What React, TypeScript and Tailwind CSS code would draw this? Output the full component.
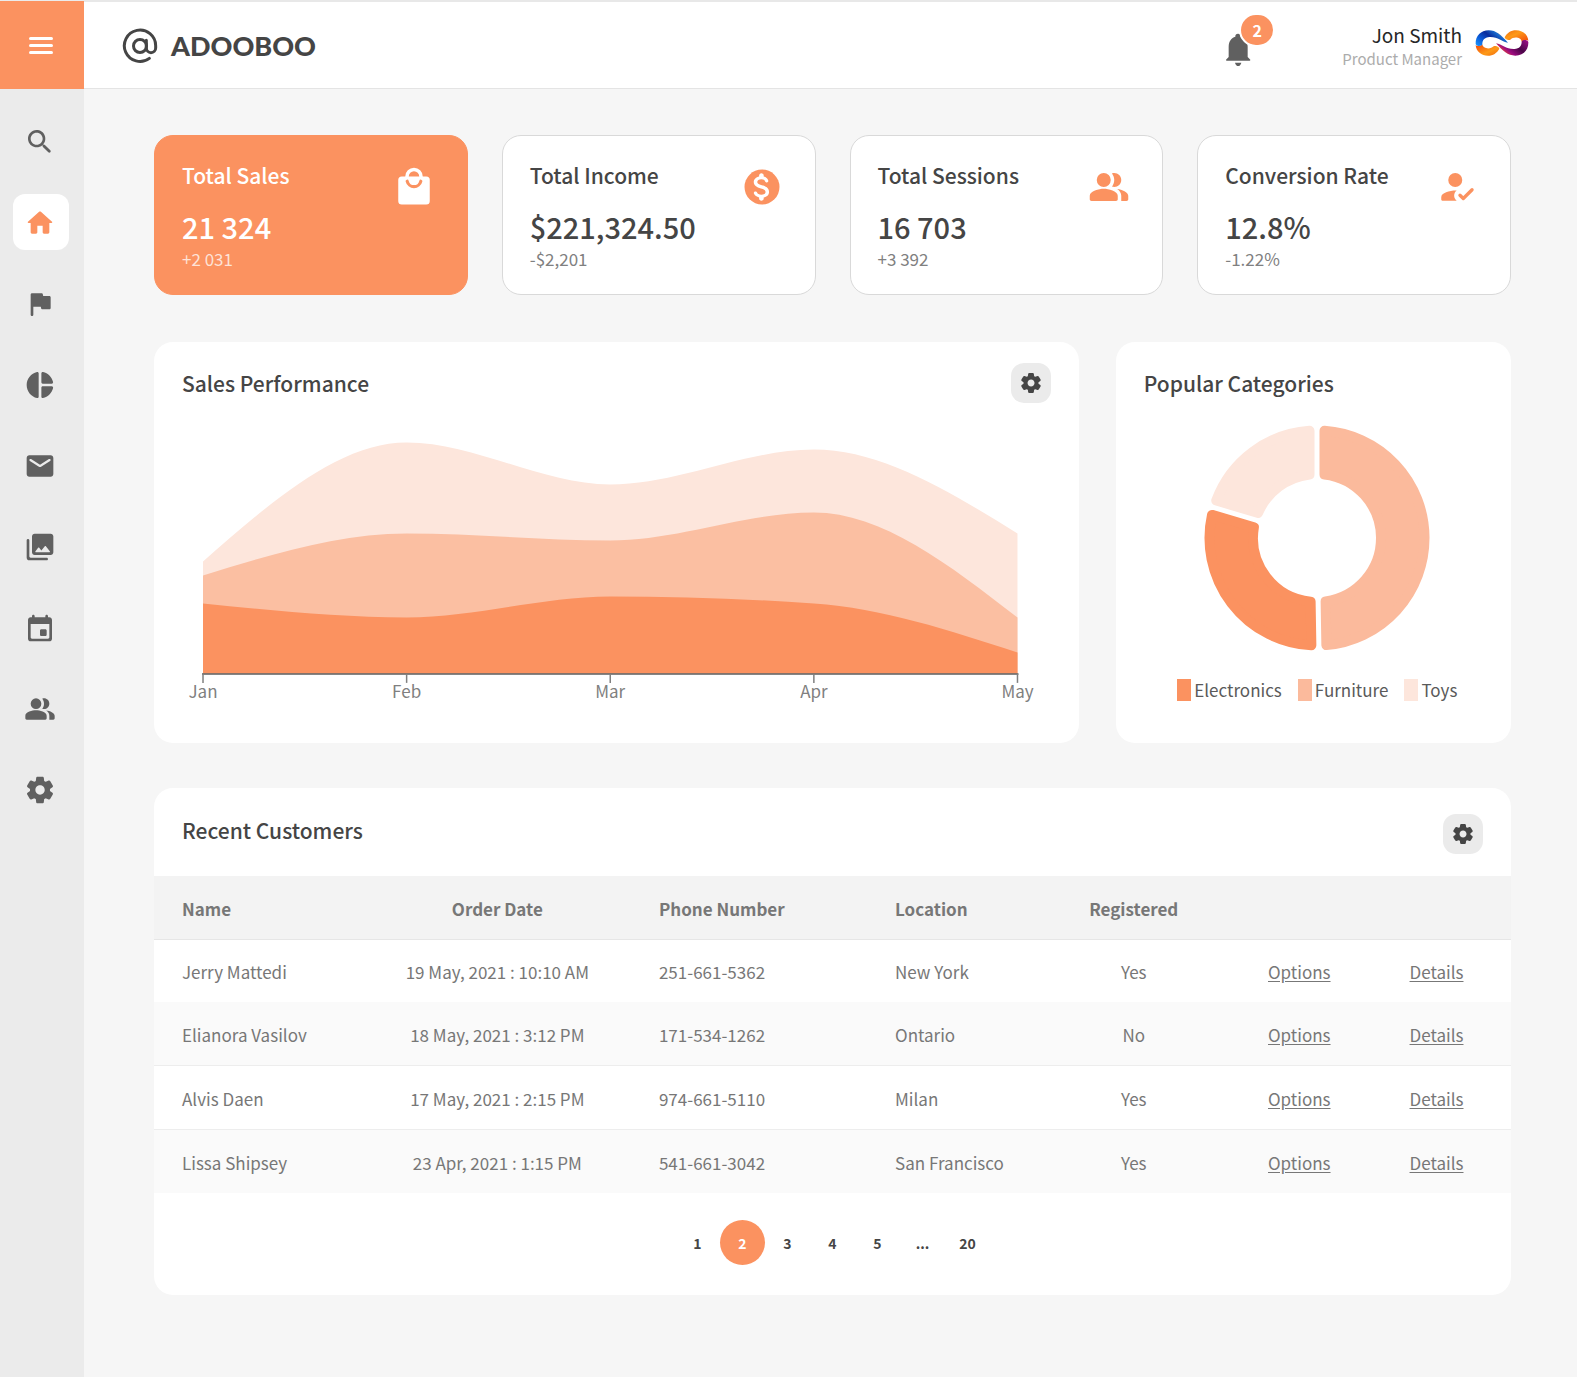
import React from "react";

const ICONS = {
  search:
    "M15.5 14h-.79l-.28-.27c1.2-1.4 1.82-3.31 1.48-5.34-.47-2.78-2.79-5-5.59-5.34-4.23-.52-7.79 3.04-7.27 7.27.34 2.8 2.56 5.12 5.34 5.59 2.03.34 3.94-.28 5.34-1.48l.27.28v.79l4.25 4.25c.41.41 1.08.41 1.49 0 .41-.41.41-1.08 0-1.49L15.5 14zm-6 0C7.01 14 5 11.99 5 9.5S7.01 5 9.5 5 14 7.01 14 9.5 11.99 14 9.5 14z",
  home: "M10 19v-5h4v5c0 .55.45 1 1 1h3c.55 0 1-.45 1-1v-7h1.7c.46 0 .68-.57.33-.87L12.67 3.6c-.38-.34-.96-.34-1.34 0l-8.36 7.53c-.34.3-.13.87.33.87H5v7c0 .55.45 1 1 1h3c.55 0 1-.45 1-1z",
  flag: "M14.4 6l-.24-1.2c-.09-.46-.5-.8-.98-.8H6c-.55 0-1 .45-1 1v15c0 .55.45 1 1 1s1-.45 1-1v-6h5.6l.24 1.2c.09.47.5.8.98.8H19c.55 0 1-.45 1-1V7c0-.55-.45-1-1-1h-4.6z",
  pie: "M11 3.18v17.64c0 .64-.59 1.12-1.21.98C5.32 20.8 2 16.79 2 12s3.32-8.8 7.79-9.8c.62-.14 1.21.34 1.21.98zm2.03 0v6.81c0 .55.45 1 1 1h6.79c.64 0 1.12-.59.98-1.22-.85-3.76-3.8-6.72-7.55-7.57-.63-.14-1.22.34-1.22.98zm0 10.83v6.81c0 .64.59 1.12 1.22.98 3.76-.85 6.71-3.82 7.56-7.58.14-.62-.35-1.22-.98-1.22h-6.79c-.56.01-1.01.46-1.01 1.01z",
  mail: "M20 4H4c-1.1 0-2 .9-2 2v12c0 1.1.9 2 2 2h16c1.1 0 2-.9 2-2V6c0-1.1-.9-2-2-2zm-.4 4.25l-7.07 4.42c-.32.2-.74.2-1.06 0L4.4 8.25c-.25-.16-.4-.43-.4-.72 0-.67.73-1.07 1.3-.72L12 11l6.7-4.19c.57-.35 1.3.05 1.3.72 0 .29-.15.56-.4.72z",
  photos:
    "M22 16V4c0-1.1-.9-2-2-2H8c-1.1 0-2 .9-2 2v12c0 1.1.9 2 2 2h12c1.1 0 2-.9 2-2zm-10.6-3.47l1.63 2.18 2.58-3.22c.2-.25.58-.25.78 0l2.96 3.7c.26.33.03.81-.39.81H9c-.41 0-.65-.47-.4-.8l2-2.67c.2-.26.6-.26.8 0zM2 7v13c0 1.1.9 2 2 2h13c.55 0 1-.45 1-1s-.45-1-1-1H5c-.55 0-1-.45-1-1V7c0-.55-.45-1-1-1s-1 .45-1 1z",
  event:
    "M16 13h-3c-.55 0-1 .45-1 1v3c0 .55.45 1 1 1h3c.55 0 1-.45 1-1v-3c0-.55-.45-1-1-1zm0-10v1H8V3c0-.55-.45-1-1-1s-1 .45-1 1v1H5c-1.11 0-1.99.9-1.99 2L3 20c0 1.1.89 2 2 2h14c1.1 0 2-.9 2-2V6c0-1.1-.9-2-2-2h-1V3c0-.55-.45-1-1-1s-1 .45-1 1zm2 17H6c-.55 0-1-.45-1-1V9h14v10c0 .55-.45 1-1 1z",
  people:
    "M9 4a4 4 0 1 1 0 8a4 4 0 0 1 0-8zM13.67 4.24C14.5 5.27 15 6.58 15 8s-.5 2.73-1.33 3.76c.42.14.86.24 1.33.24 2.21 0 4-1.79 4-4s-1.79-4-4-4c-.47 0-.91.1-1.33.24zM9 13c-2.67 0-8 1.34-8 4v2c0 .55.45 1 1 1h14c.55 0 1-.45 1-1v-2c0-2.66-5.33-4-8-4zM16.67 13.13C18.04 14.06 19 15.32 19 17v3h3c.55 0 1-.45 1-1v-2c0-2.18-3.57-3.47-6.33-3.87z",
  settings:
    "M19.5 12c0-.23-.01-.45-.03-.68l1.86-1.41c.4-.3.51-.86.26-1.3l-1.87-3.23c-.25-.44-.79-.62-1.25-.42l-2.15.91c-.37-.26-.76-.49-1.17-.68l-.29-2.31c-.06-.5-.49-.88-.99-.88h-3.73c-.51 0-.94.38-1 .88l-.29 2.31c-.41.19-.8.42-1.17.68l-2.15-.91c-.46-.2-1-.02-1.25.42L2.41 8.62c-.25.44-.14.99.26 1.3l1.86 1.41c-.02.22-.03.44-.03.67s.01.45.03.68l-1.86 1.41c-.4.3-.51.86-.26 1.3l1.87 3.23c.25.44.79.62 1.25.42l2.15-.91c.37.26.76.49 1.17.68l.29 2.31c.06.5.49.88.99.88h3.73c.5 0 .93-.38.99-.88l.29-2.31c.41-.19.8-.42 1.17-.68l2.15.91c.46.2 1 .02 1.25-.42l1.87-3.23c.25-.44.14-.99-.26-1.3l-1.86-1.41c.03-.23.04-.45.04-.68zm-7.46 3.5c-1.93 0-3.5-1.57-3.5-3.5s1.57-3.5 3.5-3.5 3.5 1.57 3.5 3.5-1.57 3.5-3.5 3.5z",
  dollar:
    "M11.8 10.9c-2.27-.59-3-1.2-3-2.15 0-1.09 1.01-1.85 2.7-1.85 1.42 0 2.13.54 2.39 1.4.12.4.45.7.87.7h.3c.66 0 1.13-.65.9-1.27-.42-1.18-1.4-2.16-2.96-2.54V4.5c0-.83-.67-1.5-1.5-1.5S10 3.67 10 4.5v.66c-1.94.42-3.5 1.68-3.5 3.61 0 2.31 1.91 3.46 4.7 4.13 2.5.6 3 1.48 3 2.41 0 .69-.49 1.79-2.7 1.79-1.65 0-2.5-.59-2.83-1.43-.15-.39-.49-.67-.9-.67h-.28c-.67 0-1.14.68-.89 1.3.57 1.39 1.9 2.21 3.4 2.53v.67c0 .83.67 1.5 1.5 1.5s1.5-.67 1.5-1.5v-.65c1.95-.37 3.5-1.5 3.5-3.55 0-2.84-2.43-3.81-4.7-4.4z",
};

function Icon({ d, className }: { d: string; className: string }) {
  return (
    <svg viewBox="0 0 24 24" className={className} fill="currentColor" aria-hidden="true">
      <path d={d} />
    </svg>
  );
}

function BagIcon() {
  return (
    <svg viewBox="0 0 24 24" className="size-[42px]" aria-hidden="true">
      <rect x="3" y="6" width="18" height="16" rx="2" fill="white" />
      <path d="M8 7V6a4 4 0 0 1 8 0v1" fill="none" stroke="white" strokeWidth="2" />
      <path d="M8.100 8.700a4 4 0 0 0 7.800 0" fill="none" stroke="#fb9260" strokeWidth="1.800" strokeLinecap="round" />
    </svg>
  );
}

function DollarIcon() {
  return (
    <svg viewBox="0 0 24 24" className="size-[42px]" aria-hidden="true">
      <circle cx="12" cy="12" r="10" fill="#fb9260" />
      <path d={ICONS.dollar} fill="white" transform="translate(1.6 1.500) scale(.875)" />
    </svg>
  );
}

function PersonCheckIcon() {
  return (
    <svg viewBox="0 0 24 24" className="size-[42px]" aria-hidden="true">
      <circle cx="11" cy="8" r="4" fill="#fb9260" />
      <path d="M3 19v-1.200C3 15.200 8 13.900 11.800 14c-1.900 1.500-1.900 4.300 0 5.800H3.600c-.4 0-.6-.3-.6-.8z" fill="#fb9260" />
      <path d="M13.700 16.700l1.900 1.900 5-5" fill="none" stroke="#fb9260" strokeWidth="1.900" strokeLinecap="round" strokeLinejoin="round" />
    </svg>
  );
}

function AtLogo() {
  return (
    <svg viewBox="364 83 108 108" className="size-9" fill="none" stroke="#454545" strokeWidth="9" strokeLinecap="round" aria-hidden="true">
      <path d="M446 174A47 47 0 1 1 465 137v6a14 14 0 0 1-28 0V120" />
      <circle cx="418" cy="137" r="19.500" />
    </svg>
  );
}

function InfinityAvatar() {
  return (
    <svg viewBox="894 91 162 78" className="h-[26px] w-[54px]" aria-hidden="true">
      <defs>
        <linearGradient id="blue" x1="0" y1="1" x2="1" y2="0.400">
          <stop offset="0" stopColor="#1c9bff" />
          <stop offset="0.300" stopColor="#0b5fdc" />
          <stop offset="0.600" stopColor="#0a2c9c" />
          <stop offset="0.850" stopColor="#1a6fd0" />
          <stop offset="0.920" stopColor="#ff6a1f" />
        </linearGradient>
        <linearGradient id="purple" x1="0" y1="1" x2="1" y2="0.400">
          <stop offset="0" stopColor="#a3108c" />
          <stop offset="0.450" stopColor="#4a0648" />
          <stop offset="0.750" stopColor="#9c0b80" />
          <stop offset="1" stopColor="#ff5a1f" />
        </linearGradient>
        <linearGradient id="orange" x1="0" y1="0" x2="1" y2="1">
          <stop offset="0" stopColor="#f2460a" />
          <stop offset="0.600" stopColor="#fd9a18" />
          <stop offset="1" stopColor="#f26a0c" />
        </linearGradient>
        <path id="ribbon" d="M896 133C895 108 912 92 935 92C958 92 972 106 993 129C975 126 962 111 938 112C922 113 916 122 916 134C915 140 900 142 896 133Z" />
        <path id="tail" d="M896 136C897 156 914 168 933 168C948 168 960 160 967 147C965 139 955 137 950 140C942 149 918 149 916 134C911 140 900 140 896 136Z" />
      </defs>
      <use href="#tail" fill="url(#orange)" />
      <use href="#tail" fill="url(#orange)" transform="rotate(180 975 130)" />
      <use href="#ribbon" fill="url(#blue)" />
      <use href="#ribbon" fill="url(#purple)" transform="rotate(180 975 130)" />
    </svg>
  );
}

const NAV = [
  { label: "Search", d: ICONS.search },
  { label: "Home", d: ICONS.home, active: true },
  { label: "Goals", d: ICONS.flag },
  { label: "Reports", d: ICONS.pie },
  { label: "Mail", d: ICONS.mail },
  { label: "Gallery", d: ICONS.photos },
  { label: "Calendar", d: ICONS.event },
  { label: "People", d: ICONS.people },
  { label: "Settings", d: ICONS.settings },
];

function Sidebar() {
  return (
    <aside className="flex w-[84px] shrink-0 flex-col bg-[#ebebeb]">
      <button aria-label="Menu" className="mt-px flex h-[88px] flex-col items-center justify-center gap-1 bg-[#fb9260] pt-px pr-[3px]">
        <span className="h-[3px] w-6 rounded-sm bg-white" />
        <span className="h-[3px] w-6 rounded-sm bg-white" />
        <span className="h-[3px] w-6 rounded-sm bg-white" />
      </button>
      <nav className="mt-6 flex flex-col items-center gap-[25px] pr-0.5">
        {NAV.map((n) => (
          <a
            key={n.label}
            href="#"
            aria-label={n.label}
            className={
              n.active
                ? "flex size-14 items-center justify-center rounded-xl bg-white pt-0.5 pr-0.5 text-[#fb9260]"
                : "flex size-14 items-center justify-center pt-0.5 pr-0.5 text-[#606060]"
            }
          >
            <Icon d={n.d} className="size-8" />
          </a>
        ))}
      </nav>
    </aside>
  );
}

function Header() {
  return (
    <header className="flex h-[89px] items-center border-t-2 border-b border-t-[#e8e8e8] border-b-[#e4e4e4] bg-white pr-12 pl-[38px]">
      <a href="#" className="flex items-center gap-[13px] pt-0.5 text-[#454545]">
        <AtLogo />
        <span className="font-['Lato',sans-serif] text-[27px] leading-9 font-black">ADOOBOO</span>
      </a>
      <button aria-label="Notifications, 2 unread" className="relative mt-2.5 mr-[90px] ml-auto">
        <svg viewBox="140 99 84 102" className="h-[34px] w-7" fill="#606060" aria-hidden="true">
          <path d="M148 182q-2 0-2-3l8-8V140C154 124 162 113 174 110v-1a8 8 0 0 1 16 0v1C202 113 211 124 211 140V171l8 8q0 3-2 3Z" />
          <path d="M173 188h19q-3 10-9.500 10T173 188z" />
        </svg>
        <span className="absolute -top-5 left-[15px] flex h-[34px] w-9 items-center justify-center rounded-full border-2 border-white bg-[#fb9260] text-base leading-5 font-bold text-white">
          2
        </span>
      </button>
      <div className="flex items-center gap-[13px]">
        <div className="pt-1 text-right">
          <p className="text-[19px] leading-6 text-[#262626]">Jon Smith</p>
          <p className="text-[15px] leading-6 text-[#acacac]">Product Manager</p>
        </div>
        <div className="pb-1">
          <InfinityAvatar />
        </div>
      </div>
    </header>
  );
}

const STATS = [
  { label: "Total Sales", value: "21 324", delta: "+2 031", icon: <BagIcon />, active: true },
  { label: "Total Income", value: "$221,324.50", delta: "-$2,201", icon: <DollarIcon /> },
  { label: "Total Sessions", value: "16 703", delta: "+3 392", icon: <Icon d={ICONS.people} className="size-[42px] text-[#fb9260]" /> },
  { label: "Conversion Rate", value: "12.8%", delta: "-1.22%", icon: <PersonCheckIcon /> },
];

function StatCards() {
  return (
    <section className="grid grid-cols-4 gap-[34px]">
      {STATS.map((s) => (
        <article
          key={s.label}
          className={
            s.active
              ? "flex items-start justify-between rounded-[19px] border border-[#fb9260] bg-[#fb9260] pt-[25px] pr-8 pb-[23px] pl-[27px] text-white"
              : "flex items-start justify-between rounded-[19px] border border-[#d9d9d9] bg-white pt-[25px] pr-8 pb-[23px] pl-[27px] text-[#454545]"
          }
        >
          <div>
            <h2 className="text-[21px] leading-7 font-medium">{s.label}</h2>
            <p className="mt-[19px] text-[29px] leading-9 font-medium">{s.value}</p>
            <p className={s.active ? "mt-[3px] text-[17px] leading-6 text-white/75" : "mt-[3px] text-[17px] leading-6 text-[#808080]"}>
              {s.delta}
            </p>
          </div>
          <div className="mt-[5px]">{s.icon}</div>
        </article>
      ))}
    </section>
  );
}

function GearButton({ label }: { label: string }) {
  return (
    <button aria-label={label} className="flex size-10 items-center justify-center rounded-[13px] bg-[#ebebeb] text-[#454545]">
      <Icon d={ICONS.settings} className="size-6" />
    </button>
  );
}

const MONTHS = ["Jan", "Feb", "Mar", "Apr", "May"];
const SERIES = [
  { fill: "#fde6dc", values: [16, 33, 27, 32, 20] },
  { fill: "#fbbfa2", values: [14, 20, 19, 23, 8] },
  { fill: "#fb9260", values: [10, 8, 11, 10, 3] },
];
const STEP = 203.7;
const BASE = 270.5;
const monthX = (i: number) => 21 + i * STEP;

/* Area under a monotone cubic curve, so the curve never overshoots its points. */
function areaPath(values: number[]) {
  const y = values.map((v) => BASE - v * 7);
  const n = y.length;
  const s = y.slice(1).map((v, i) => (v - y[i]) / STEP);
  const m = y.map((_, i) => {
    if (i === 0 || i === n - 1) return 0;
    const a = s[i - 1];
    const b = s[i];
    return (Math.sign(a) + Math.sign(b)) * Math.min(Math.abs(a), Math.abs(b), Math.abs(a + b) / 4);
  });
  m[0] = (3 * s[0] - m[1]) / 2;
  m[n - 1] = (3 * s[n - 2] - m[n - 2]) / 2;
  const h = STEP / 3;
  let d = `M${monthX(0)} ${BASE}V${y[0]}`;
  for (let i = 1; i < n; i++) {
    d += `C${monthX(i - 1) + h} ${y[i - 1] + m[i - 1] * h} ${monthX(i) - h} ${y[i] - m[i] * h} ${monthX(i)} ${y[i]}`;
  }
  return `${d}V${BASE}Z`;
}

function SalesChart() {
  return (
    <svg viewBox="0 0 869 310" className="block h-auto w-full" role="img" aria-label="Sales performance by month">
      {SERIES.map((s) => (
        <path key={s.fill} d={areaPath(s.values)} fill={s.fill} />
      ))}
      <path d={`M20 271H${monthX(4) + 1}`} stroke="#5c5c5c" strokeWidth="1.500" />
      {MONTHS.map((m, i) => (
        <g key={m}>
          <path d={`M${monthX(i)} 271v9`} stroke="#808080" strokeWidth="1.500" />
          <text x={monthX(i)} y="295" textAnchor="middle" className="fill-[#808080] text-[17px]">
            {m}
          </text>
        </g>
      ))}
    </svg>
  );
}

const CATEGORIES = [
  { name: "Electronics", from: 179, to: 286.4, fill: "#fb9260", swatch: "h-[22px] w-3.5 bg-[#fb9260]" },
  { name: "Furniture", from: 0, to: 179, fill: "#fbba9c", swatch: "h-[22px] w-3.5 bg-[#fbba9c]" },
  { name: "Toys", from: 286.4, to: 360, fill: "#fde6dc", swatch: "h-[22px] w-3.5 bg-[#fde6dc]" },
];

/* Ring segment inset by the corner radius; its round-joined stroke fills it out again. */
function segmentPath(from: number, to: number) {
  const corner = 5;
  const outer = 112.5 - corner;
  const inner = 59 + corner;
  const inset = 2.5 + corner;
  const pt = (r: number, deg: number, side: number) => {
    const a = (deg * Math.PI) / 180 + side * Math.asin(inset / r);
    return `${(113 + r * Math.sin(a)).toFixed(2)} ${(113 - r * Math.cos(a)).toFixed(2)}`;
  };
  const large = to - from > 180 ? 1 : 0;
  return `M${pt(outer, from, 1)}A${outer} ${outer} 0 ${large} 1 ${pt(outer, to, -1)}L${pt(inner, to, -1)}A${inner} ${inner} 0 ${large} 0 ${pt(inner, from, 1)}Z`;
}

function Categories() {
  return (
    <div className="mt-[22px] flex flex-col items-center pl-2">
      <svg viewBox="0 0 226 226" className="size-[226px]" role="img" aria-label="Popular categories">
        {CATEGORIES.map((c) => (
          <path key={c.name} d={segmentPath(c.from, c.to)} fill={c.fill} stroke={c.fill} strokeWidth="10" strokeLinejoin="round" />
        ))}
      </svg>
      <ul className="mt-7 flex gap-4 text-[17px] leading-[22px] text-[#5a5a5a]">
        {CATEGORIES.map((c) => (
          <li key={c.name} className="flex gap-[3px]">
            <span className={c.swatch} />
            {c.name}
          </li>
        ))}
      </ul>
    </div>
  );
}

const CUSTOMERS = [
  ["Jerry Mattedi", "19 May, 2021 : 10:10 AM", "251-661-5362", "New York", "Yes"],
  ["Elianora Vasilov", "18 May, 2021 : 3:12 PM", "171-534-1262", "Ontario", "No"],
  ["Alvis Daen", "17 May, 2021 : 2:15 PM", "974-661-5110", "Milan", "Yes"],
  ["Lissa Shipsey", "23 Apr, 2021 : 1:15 PM", "541-661-3042", "San Francisco", "Yes"],
];
const ROW_STYLES = [
  "h-[62px] bg-white",
  "h-16 border-b border-[#ededed] bg-[#fafafa]",
  "h-16 border-b border-[#ededed] bg-white",
  "h-[63px] bg-[#fafafa]",
];
const PAGES = ["1", "2", "3", "4", "5", "...", "20"];

function Customers() {
  return (
    <section className="mt-[45px] rounded-[19px] bg-white pb-[30px]">
      <div className="flex h-[88px] items-center justify-between pr-7 pl-7">
        <h2 className="pb-[3px] text-[21px] leading-7 font-medium text-[#454545]">Recent Customers</h2>
        <div className="pt-1">
          <GearButton label="Customer table settings" />
        </div>
      </div>
      <table className="w-full table-fixed text-[17px] leading-6 text-[#777777]">
        <colgroup>
          <col className="w-[15.6%]" />
          <col className="w-[19.4%]" />
          <col className="w-[17.4%]" />
          <col className="w-[15.1%]" />
          <col className="w-[9.4%]" />
          <col className="w-[15%]" />
          <col className="w-[8.1%]" />
        </colgroup>
        <thead>
          <tr className="h-16 border-b border-[#e6e6e6] bg-[#f3f3f3] font-bold">
            <th className="pt-0.5 pl-7 text-left">Name</th>
            <th className="pt-0.5 text-center">Order Date</th>
            <th className="pt-0.5 pl-[30px] text-left">Phone Number</th>
            <th className="pt-0.5 pl-[30px] text-left">Location</th>
            <th className="pt-0.5 text-center">Registered</th>
            <th aria-label="Options" />
            <th aria-label="Details" />
          </tr>
        </thead>
        <tbody>
          {CUSTOMERS.map(([name, date, phone, city, registered], i) => (
            <tr key={name} className={ROW_STYLES[i]}>
              <td className="pt-0.5 pl-7">{name}</td>
              <td className="pt-0.5 text-center">{date}</td>
              <td className="pt-0.5 pl-[30px]">{phone}</td>
              <td className="pt-0.5 pl-[30px]">{city}</td>
              <td className="pt-0.5 text-center">{registered}</td>
              <td className="pt-0.5 text-center">
                <a href="#" className="underline underline-offset-2">Options</a>
              </td>
              <td className="pt-0.5 pr-[39px] text-center">
                <a href="#" className="underline underline-offset-2">Details</a>
              </td>
            </tr>
          ))}
        </tbody>
      </table>
      <nav aria-label="Pages" className="mt-[27px] flex justify-center">
        {PAGES.map((p) => (
          <button
            key={p}
            className={
              p === "2"
                ? "size-[45px] rounded-full bg-[#fb9260] pt-0.5 text-sm font-bold text-white"
                : "size-[45px] rounded-full pt-0.5 text-sm font-bold text-[#454545]"
            }
          >
            {p}
          </button>
        ))}
      </nav>
    </section>
  );
}

export default function App() {
  return (
    <div className="flex min-h-screen bg-[#f6f6f6] font-['Noto_Sans_CJK_SC',sans-serif]">
      <Sidebar />
      <div className="min-w-0 grow">
        <Header />
        <main className="pt-[46px] pr-[66px] pb-20 pl-[70px]">
          <StatCards />
          <div className="mt-[47px] grid grid-cols-[924fr_395fr] gap-[37px]">
            <section className="min-w-0 rounded-[19px] bg-white px-7 pt-[21px] pb-[30px]">
              <div className="flex h-10 items-center justify-between">
                <h2 className="text-[21px] leading-7 font-medium text-[#454545]">Sales Performance</h2>
                <GearButton label="Sales chart settings" />
              </div>
              <SalesChart />
            </section>
            <section className="min-w-0 rounded-[19px] bg-white px-7 pt-[21px] pb-[30px]">
              <div className="flex h-10 items-center">
                <h2 className="text-[21px] leading-7 font-medium text-[#454545]">Popular Categories</h2>
              </div>
              <Categories />
            </section>
          </div>
          <Customers />
        </main>
      </div>
    </div>
  );
}
